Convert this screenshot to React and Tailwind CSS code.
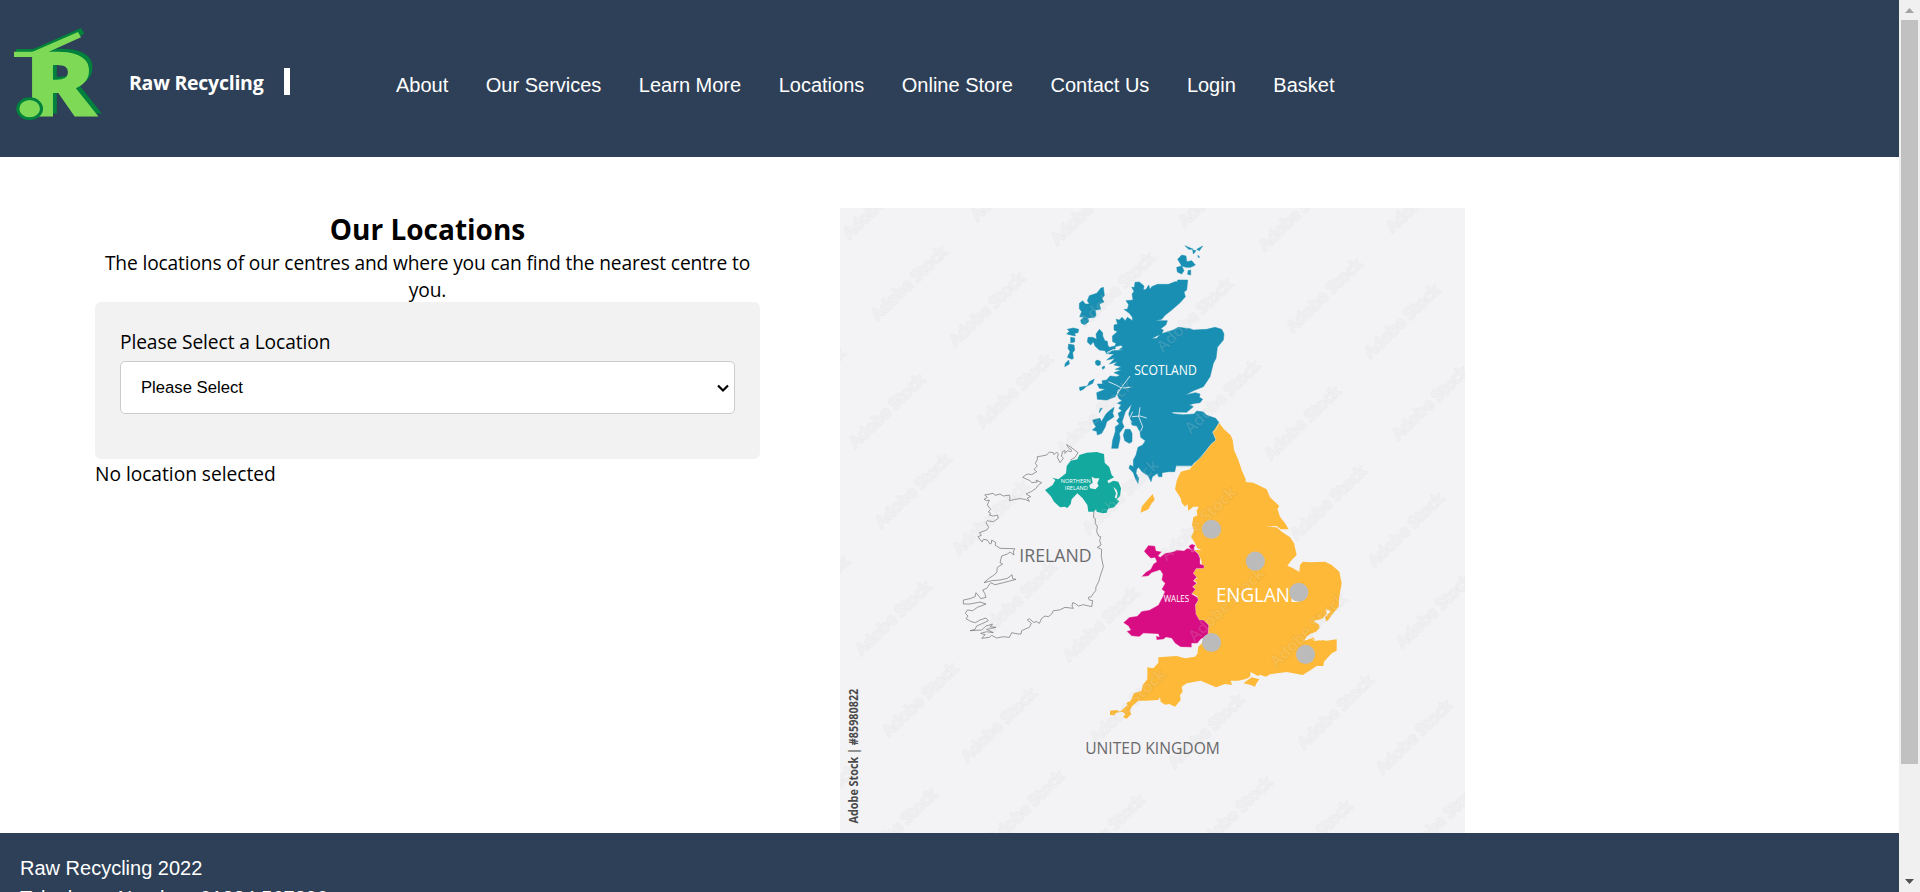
const NAV = ['About', 'Our Services', 'Learn More', 'Locations', 'Online Store', 'Contact Us', 'Login', 'Basket'];

const MARK_ORIGINS = [
  [20, 75], [340, 30], [90, 280], [285, 345], [355, 550], [35, 600], [100, 800],
  [295, 868], [365, 1072], [50, 1120], [118, 1325], [315, 1388], [65, 1640], [385, 1595],
];
const MARKS = MARK_ORIGINS
  .flatMap(([x, y]) => [-1, 0, 1, 2].map((k) => [x + k * 521, y + k * 15]))
  .filter(([x, y]) => x > -170 && x < 1550 && y - 175 < 1550);

const CENTRES = [[932, 806], [1042, 886], [1151, 964], [932, 1090], [1168, 1120]];

function Logo() {
  return (
    <svg className="h-[130px] w-[104px] shrink-0" viewBox="0 0 312 390" aria-label="Raw Recycling logo">
      <g fill="#00813c">
        <polygon points="48,147 100,147 243,84 253,101 240,108 130,160 48,160" />
        <text x="83" y="342" fontFamily="Open Sans" fontWeight="800" fontSize="270" textLength="218" lengthAdjust="spacingAndGlyphs">R</text>
      </g>
      <g fill="#7ed957">
        <polygon points="42,155 98,155 234,96 243,112 140,158 140,171 42,171" />
        <text x="71" y="352" fontFamily="Open Sans" fontWeight="800" fontSize="270" textLength="220" lengthAdjust="spacingAndGlyphs">R</text>
      </g>
      <ellipse cx="89" cy="326" rx="40" ry="34" fill="#00813c" />
      <ellipse cx="89" cy="326" rx="31" ry="26" fill="#7ed957" />
    </svg>
  );
}

function LocationsMap() {
  return (
    <svg className="block h-[625px] w-[625px] bg-[#f3f3f5]" viewBox="0 0 1568 1568" fontFamily="'Open Sans', 'Noto Sans', sans-serif">
      <g transform="translate(501.8 55.2) scale(.8363)" fill="#198fb3" stroke="#198fb3" strokeWidth="1.5" strokeLinejoin="round">
        <path d="M443 150L413 150 412 155 405 155 385 163 352 163 335 170 330 178 326 165 318 178 310 180 312 168 305 162 298 156 285 157 283 172 275 172 282 184 276 192 279 210 258 212 266 224 262 238 252 238 268 250 277 262 278 272 262 262 256 272 246 262 238 270 228 268 233 282 222 285 222 300 232 305 217 318 218 335 228 340 224 350 244 346 248 352 238 358 250 360 215 362 205 372 222 372 200 390 225 385 208 402 232 395 222 405 244 410 226 418 244 420 222 428 240 436 230 440 210 438 200 450 186 452 188 462 172 462 178 475 196 478 170 488 172 508 200 510 226 500 232 492 236 505 246 512 232 520 244 524 236 535 246 542 234 550 238 562 230 572 238 582 226 590 226 605 218 630 215 655 234 655 240 625 238 610 252 590 246 576 256 545 275 522 266 552 276 585 290 588 300 605 302 622 316 632 308 645 294 652 288 675 280 690 280 710 270 705 267 715 280 728 286 745 294 760 296 745 288 730 290 718 296 712 306 725 325 738 333 755 337 740 352 730 356 740 366 740 366 728 385 725 404 725 408 708 455 708 462 698 478 688 500 660 515 642 526 640 530 628 520 606 528 600 537 578 527 565 500 556 490 546 470 543 462 552 430 554 400 551 395 546 440 547 460 530 448 524 465 520 480 518 488 508 478 502 480 492 466 488 436 495 460 482 490 470 510 440 520 400 528 385 532 352 550 330 552 312 545 298 525 292 500 298 460 300 450 296 415 292 400 300 362 312 350 325 334 326 350 318 365 312 370 300 362 296 378 284 382 272 345 272 365 268 375 256 395 240 420 218 436 200 432 186 440 180Z" />
        <path d="M190 172L182 175 170 190 148 197 142 212 148 222 136 222 128 212 118 220 118 236 125 245 119 260 132 262 122 270 124 280 134 284 146 275 144 264 164 262 168 256 166 240 182 238 178 222 192 216 186 206 193 196ZM82 298L100 294 116 298 114 308 104 310 106 318 92 315 80 312 88 304ZM92 322L104 324 104 336 92 338ZM86 342L102 345 104 360 98 368 100 385 96 388 82 382 90 365 84 355ZM86 390L88 402 74 410 76 400Z" />
        <path d="M178 298L188 308 188 318 198 340 208 352 225 348 226 356 212 362 205 368 200 372 195 362 178 360 165 348 160 335 152 345 142 336 144 322 158 322 170 328 168 312ZM196 332L202 334 204 350 198 344ZM166 394L172 390 181 394 181 404 174 407 167 403ZM186 412L193 408 194 414 188 418ZM118 472L140 468 130 478 120 482ZM142 468L148 455 163 447 158 460Z" />
        <path d="M222 532L218 550 222 560 200 575 196 590 185 610 172 615 170 604 157 600 168 590 160 578 158 570 180 565 184 575 198 552 208 542ZM178 548L180 536 187 534ZM256 598L270 598 276 610 276 635 268 640 254 632 250 615Z" />
        <path d="M413 88L425 75 438 78 440 95 455 92 466 105 452 112 438 112 425 108ZM410 112L425 108 432 122 425 132 412 126ZM444 122L452 120 452 135 443 133ZM435 47L460 58 446 58ZM458 60L468 62 460 72ZM470 58L488 48 478 62ZM474 76L479 82 474 82Z" />
        <path fill="none" stroke="#f3f3f5" strokeWidth="2.5" d="M228 498L246 470 270 438M205 455L230 466 244 474M248 474L270 472M236 478L232 490M200 368L222 358M300 532L296 560 308 590 302 604M276 560L300 558 320 564M278 545L268 566 276 578M290 590L286 600" />
      </g>
      <g transform="translate(677.4 506.8) scale(.8363)">
        <g fill="#fdb937">
          <path d="M327 38L342 58 362 76 368 90 372 120 385 150 395 180 407 208 407 216 430 218 470 238 480 262 508 288 502 296 510 320 525 340 536 358 512 358 500 348 467 350 500 352 515 365 540 382 552 400 560 435 545 450 532 467 548 474 568 486 570 465 578 455 600 457 645 455 665 465 688 485 695 520 688 560 686 590 665 615 655 630 648 634 645 622 662 604 648 598 650 612 638 625 632 628 610 632 628 645 628 655 618 665 600 672 590 680 582 692 610 682 616 692 634 690 650 692 680 688 680 722 665 730 642 755 640 768 620 768 602 780 578 795 530 786 480 793 468 800 450 794 444 798 422 786 420 800 410 806 385 812 362 812 366 825 345 822 318 832 290 820 272 812 230 820 215 830 218 845 210 855 212 870 195 890 178 882 165 884 152 875 150 862 145 870 105 872 85 872 70 885 62 895 60 905 64 912 50 926 40 922 46 912 38 905 18 908 14 916 0 915 0 902 20 900 30 905 52 886 50 878 62 872 72 850 95 842 98 825 112 808 112 772 130 775 145 758 145 742 200 738 225 745 255 740 262 732 265 710 280 695 295 675 295 645 278 632 262 628 254 610 254 590 265 570 262 558 245 550 255 538 250 528 262 520 252 510 262 505 250 490 255 478 275 475 275 455 265 430 252 420 275 420 262 415 255 400 243 380 252 362 246 345 250 322 262 316 260 302 266 290 250 290 235 302 232 282 225 290 215 278 212 265 195 238 200 212 212 185 240 178 246 168 255 158 275 140 290 120 303 103 318 90 308 66Z" />
          <path d="M400 820L425 802 448 808 438 822 435 830 420 824ZM128 252L134 270 125 280 115 298 92 308 95 290 110 272Z" />
        </g>
        <path fill="none" stroke="#f3f3f5" strokeWidth="2" d="M586 690L604 684 614 692 626 688 634 693" />
        <path fill="none" stroke="#f3f3f5" strokeWidth="1.5" d="M327 38L318 60 308 66 318 90 303 103 290 120 268 145 246 168 198 168" />
        <path fill="#d80d83" stroke="#f9dfe9" strokeWidth="1" d="M112 410L115 406 135 408 138 422 155 425 145 437 150 442 165 430 190 425 200 420 222 422 232 415 252 420 265 432 270 445 270 462 282 466 282 475 258 476 250 490 260 502 250 512 260 520 248 530 256 538 245 552 262 562 265 570 256 585 258 612 268 630 280 630 296 645 294 675 272 688 262 700 245 700 245 712 212 711 195 700 185 685 168 682 160 688 140 690 138 678 148 680 145 672 100 670 88 680 65 678 50 664 62 660 55 648 40 638 58 622 82 618 95 604 118 600 145 585 158 560 164 545 155 538 165 520 155 510 158 492 150 480 125 488 115 498 94 500 108 486 122 478 130 462 140 455 135 443 122 445 112 435 102 424ZM236 408L246 402 256 406 252 414 254 422 246 426Z" />
      </g>
      <g transform="translate(276 557) scale(.8363)">
        <path fill="#13a99e" d="M362 92L382 88 388 75 410 68 440 66 462 72 464 98 478 112 485 135 492 142 472 152 476 160 490 152 505 155 513 175 510 198 500 208 508 214 492 232 474 236 470 248 458 250 440 245 438 238 432 245 415 245 412 225 398 205 382 190 365 208 362 222 352 234 344 230 330 232 312 215 302 198 285 180 308 165 316 150 306 143 325 148 348 130 350 108Z" />
        <path fill="#f3f3f5" d="M425 140L434 145 448 145 442 160 446 168 436 178 420 175 418 165 428 158ZM490 170L500 180 503 190 500 205 494 203 498 190Z" />
        <path fill="none" stroke="#77777a" strokeWidth="2.2" strokeLinejoin="round" d="M432 245L430 262 436 266 436 280 442 290 440 305 446 318 452 320 449 332 453 345 442 352 455 358 454 380 456 390 460 410 450 440 446 455 438 470 437 482 430 490 424 500 415 502 418 510 428 512 425 530 400 524 385 528 375 520 368 518 366 528 370 535 345 532 328 540 310 542 305 552 295 560 285 558 275 565 268 580 258 574 252 578 238 566 232 570 244 580 238 592 228 596 215 602 213 612 205 612 185 608 178 622 160 620 140 624 125 616 118 622 95 625 105 614 92 610 110 605 130 608 110 598 138 592 120 590 128 582 108 588 95 600 60 602 75 598 80 588 115 572 108 564 90 570 76 578 62 574 48 566 54 558 46 550 52 540 68 542 82 532 108 522 90 516 60 522 40 522 40 510 60 506 75 500 78 488 88 500 92 506 108 502 104 490 98 480 110 475 122 458 135 464 160 458 198 448 188 446 186 434 172 445 150 450 125 452 102 458 118 444 128 438 140 428 142 412 158 402 150 398 155 378 172 372 180 366 192 375 190 366 194 356 150 355 135 345 138 338 125 330 124 340 120 342 112 330 100 328 96 336 84 320 94 316 88 308 110 300 116 292 108 278 112 272 130 275 145 265 142 255 130 258 118 255 122 250 115 246 122 238 112 225 118 210 110 212 102 208 112 202 104 195 130 190 135 196 150 192 160 198 178 195 180 204 178 212 195 208 210 206 226 208 238 214 232 204 242 200 228 192 245 184 258 175 265 165 275 158 258 150 262 156 245 158 240 152 218 142 228 134 235 132 245 134 260 125 252 118 262 108 256 100 262 88 262 80 275 78 290 75 298 66 310 68 312 74 320 66 325 72 322 82 330 98 340 85 334 78 338 64 345 62 345 70 352 62 362 65 366 62 354 52 350 44 366 54 384 68 375 82 362 90" />
      </g>
      <g className="[paint-order:stroke]" fill="#fff" fillOpacity=".13" stroke="#4a4a52" strokeOpacity=".04" strokeWidth="7" strokeLinejoin="round" fontWeight="600" fontSize="40">
        {MARKS.map(([x, y]) => (
          <text key={`${x}-${y}`} transform={`translate(${x + 4} ${y + 4}) rotate(-44)`} textLength="246" lengthAdjust="spacingAndGlyphs">Adobe Stock</text>
        ))}
      </g>
      <g>
        <text x="738" y="419" fontSize="34" fill="#fff" textLength="157" lengthAdjust="spacingAndGlyphs">SCOTLAND</text>
        <text x="554" y="690" fontSize="15" fill="#fff" textLength="75" lengthAdjust="spacingAndGlyphs">NORTHERN</text>
        <text x="564" y="708" fontSize="15" fill="#fff" textLength="58" lengthAdjust="spacingAndGlyphs">IRELAND</text>
        <text x="450" y="889" fontSize="47" fill="#6a6a6c" textLength="181" lengthAdjust="spacingAndGlyphs">IRELAND</text>
        <text x="812" y="988" fontSize="22" fill="#fff" textLength="64" lengthAdjust="spacingAndGlyphs">WALES</text>
        <text x="943" y="988" fontSize="50" fill="#fff" textLength="220" lengthAdjust="spacingAndGlyphs">ENGLAND</text>
        <text x="615" y="1370" fontSize="43" fill="#6a6a6c" textLength="338" lengthAdjust="spacingAndGlyphs">UNITED KINGDOM</text>
        <text transform="translate(46 1544) rotate(-90)" fontSize="29" fontWeight="700" fill="#4a4a4a" textLength="338" lengthAdjust="spacingAndGlyphs">Adobe Stock | #85980822</text>
      </g>
      {CENTRES.map(([x, y]) => (
        <circle key={`${x}-${y}`} cx={x} cy={y} r="24" fill="#bbb" />
      ))}
    </svg>
  );
}

function Scrollbar() {
  return (
    <div className="flex w-[21px] shrink-0 flex-col items-center justify-between bg-[#f0f0f0]">
      <div className="flex w-full flex-col items-center">
        <svg className="h-5 w-[21px]" viewBox="0 0 21 20"><path d="M6 13L10.500 8 15 13Z" fill="#a3a3a3" /></svg>
        <div className="h-[744px] w-[17px] bg-[#c1c1c1]" />
      </div>
      <svg className="h-5 w-[21px]" viewBox="0 0 21 20"><path d="M6 7L10.500 12 15 7Z" fill="#505050" /></svg>
    </div>
  );
}

export default function App() {
  return (
    <div className="flex h-[892px] w-full overflow-hidden bg-white font-['Open_Sans','Noto_Sans',sans-serif] text-black">
      <div className="flex min-w-0 flex-1 flex-col">
        <header className="flex h-[157px] shrink-0 items-center bg-[#2e4057] text-white">
          <div className="flex h-full w-[396px] shrink-0 items-center">
            <div className="mb-[27px]"><Logo /></div>
            <div className="mt-1.5 ml-[25px] flex items-center gap-[20px]">
              <span className="w-[135px] pt-0.5 text-[19.500px] leading-[27px] font-bold tracking-[-0.25px] whitespace-nowrap">Raw Recycling</span>
              <span className="h-[27px] w-1.5 bg-white" />
            </div>
          </div>
          <nav className="mt-[13px] flex gap-[37.500px] font-['Liberation_Sans',Arial,sans-serif] text-xl leading-[30px]">
            {NAV.map((item) => <a key={item} href="#" className="whitespace-nowrap">{item}</a>)}
          </nav>
        </header>
        <main className="flex h-[676px] shrink-0 items-start pt-[51px] pl-[95px]">
          <section className="w-[665px] pt-px text-[19.200px] leading-[27px] tracking-[-0.15px]">
            <h1 className="text-center text-[28px] leading-[40px] font-bold tracking-normal">Our Locations</h1>
            <p className="-mb-px text-center">The locations of our centres and where you can find the nearest centre to<br />you.</p>
            <form className="h-[157px] rounded-[6px] bg-[#f2f2f2] px-[25px] pt-[26px]">
              <label htmlFor="location" className="block tracking-[-0.1px]">Please Select a Location</label>
              <div className="relative mt-1.5">
                <select id="location" className="block h-[53px] w-full appearance-none rounded-[5px] border border-[#ccc] bg-white px-[20px] font-['Liberation_Sans',Arial,sans-serif] text-[16.667px] tracking-normal text-black">
                  <option>Please Select</option>
                </select>
                <svg className="absolute top-[23px] right-[6px] h-[9px] w-3" viewBox="0 0 12 9" fill="none" stroke="#000" strokeWidth="2.2"><path d="M1 1.500L6 6.500 11 1.500" /></svg>
              </div>
            </form>
            <p className="pt-px tracking-[-0.03px]">No location selected</p>
          </section>
          <div className="ml-[80px]"><LocationsMap /></div>
        </main>
        <footer className="h-[59px] shrink-0 overflow-hidden bg-[#2e4057] px-5 pt-5 font-['Liberation_Sans',Arial,sans-serif] text-xl leading-[30px] text-white">
          <p>Raw Recycling 2022</p>
          <p>Telephone Number: 01234 567890</p>
        </footer>
      </div>
      <Scrollbar />
    </div>
  );
}
